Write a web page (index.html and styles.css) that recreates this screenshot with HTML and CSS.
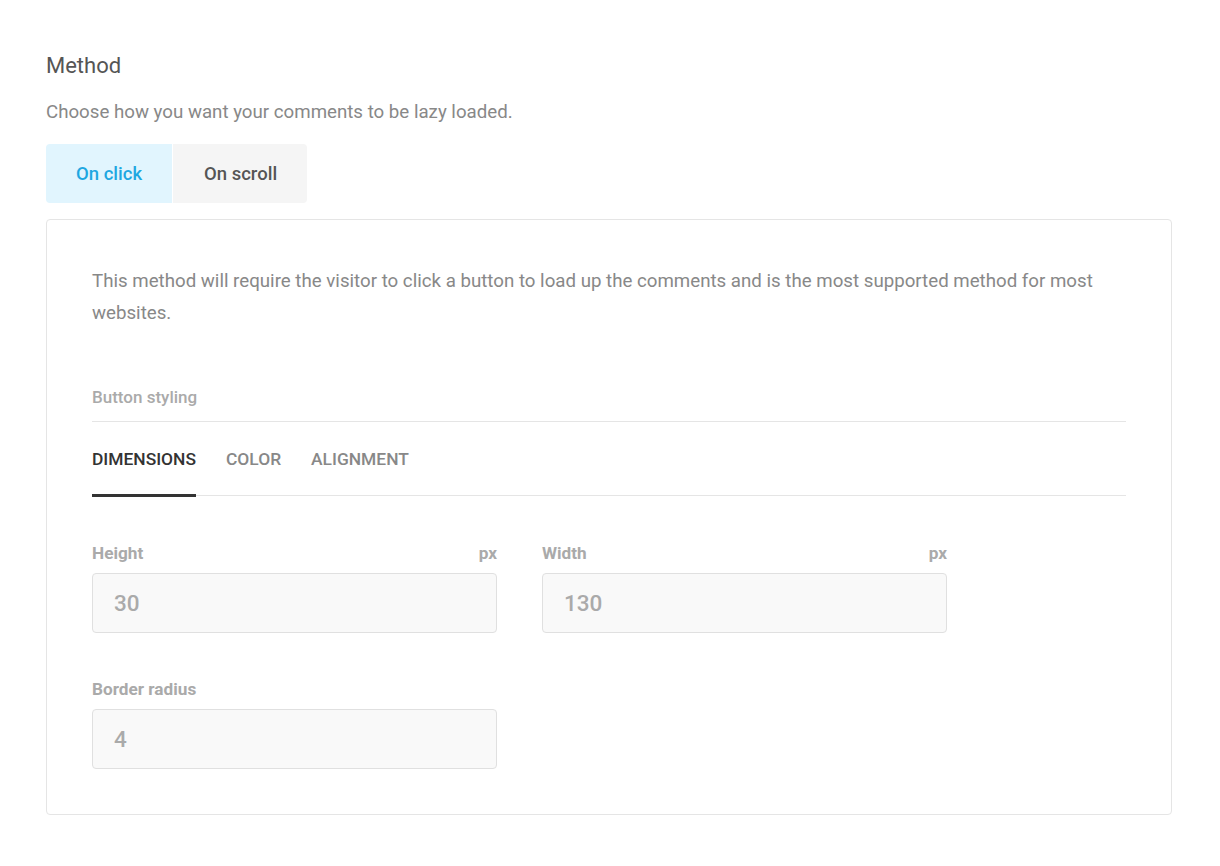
FILE: index.html
```html
<!DOCTYPE html>
<html lang="en">
<head>
<meta charset="utf-8">
<title>Method</title>
<link rel="stylesheet" href="styles.css">
</head>
<body>
<div class="page">
  <h2 class="title">Method</h2>
  <p class="subtitle">Choose how you want your comments to be lazy loaded.</p>
  <div class="toggle">
    <button class="toggle-btn active">On click</button>
    <button class="toggle-btn">On scroll</button>
  </div>
  <div class="card">
    <p class="desc">This method will require the visitor to click a button to load up the comments and is the most supported method for most websites.</p>
    <div class="section-title">Button styling</div>
    <div class="tabs">
      <div class="tab active">DIMENSIONS</div>
      <div class="tab">COLOR</div>
      <div class="tab">ALIGNMENT</div>
    </div>
    <div class="fields">
      <div class="field">
        <div class="label-row"><span class="label">Height</span><span class="unit">px</span></div>
        <div class="input">30</div>
      </div>
      <div class="field">
        <div class="label-row"><span class="label">Width</span><span class="unit">px</span></div>
        <div class="input">130</div>
      </div>
      <div class="field">
        <div class="label-row"><span class="label">Border radius</span></div>
        <div class="input">4</div>
      </div>
    </div>
  </div>
</div>
</body>
</html>
```
FILE: styles.css
```css
* { box-sizing: border-box; }
html, body { margin: 0; padding: 0; background: #fff; }
body {
  font-family: Roboto, "Liberation Sans", Arial, sans-serif;
  color: #888;
}
.page {
  padding: 51px 48px 40px 46px;
}
.title {
  margin: 0;
  font-size: 22px;
  line-height: 30px;
  font-weight: 400;
  color: #555;
}
.subtitle {
  margin: 16px 0 0;
  font-size: 18.7px;
  line-height: 30px;
  color: #888;
}
.toggle {
  display: flex;
  margin-top: 17px;
  gap: 1px;
}
.toggle-btn {
  border: 0;
  height: 59px;
  padding: 0 30px;
  font-family: inherit;
  font-size: 18.5px;
  font-weight: 500;
  background: #f5f5f5;
  color: #555;
  cursor: pointer;
}
.toggle-btn:first-child { border-radius: 4px 0 0 4px; }
.toggle-btn:last-child { border-radius: 0 4px 4px 0; padding: 0 30px 0 31px; }
.toggle-btn.active {
  background: #e1f5fe;
  color: #1ea7e1;
}
.card {
  margin-top: 16px;
  border: 1px solid #e5e5e5;
  border-radius: 4px;
  padding: 45px;
}
.desc {
  margin: 0;
  font-size: 18.7px;
  line-height: 32px;
  color: #888;
}
.section-title {
  margin-top: 56px;
  font-size: 17px;
  line-height: 24px;
  font-weight: 500;
  color: #aaa;
  padding-bottom: 12px;
  border-bottom: 1px solid #e5e5e5;
}
.tabs {
  display: flex;
  gap: 30px;
  border-bottom: 1px solid #e5e5e5;
}
.tab {
  padding: 28px 0 26px;
  font-size: 17.4px;
  line-height: 18px;
  font-weight: 500;
  color: #888;
  border-bottom: 3px solid transparent;
  margin-bottom: -2px;
}
.tab.active {
  color: #333;
  border-bottom-color: #333;
}
.fields {
  display: grid;
  grid-template-columns: 405px 405px;
  column-gap: 45px;
  row-gap: 46px;
  margin-top: 47px;
}
.label-row {
  display: flex;
  justify-content: space-between;
  font-size: 17.2px;
  line-height: 20px;
  font-weight: 700;
  color: #aaa;
  margin-bottom: 10px;
}
.input {
  height: 60px;
  border: 1px solid #e0e0e0;
  border-radius: 4px;
  background: #f9f9f9;
  padding: 0 21px;
  display: flex;
  align-items: center;
  font-size: 22.5px;
  font-weight: 500;
  color: #aaa;
}
```
